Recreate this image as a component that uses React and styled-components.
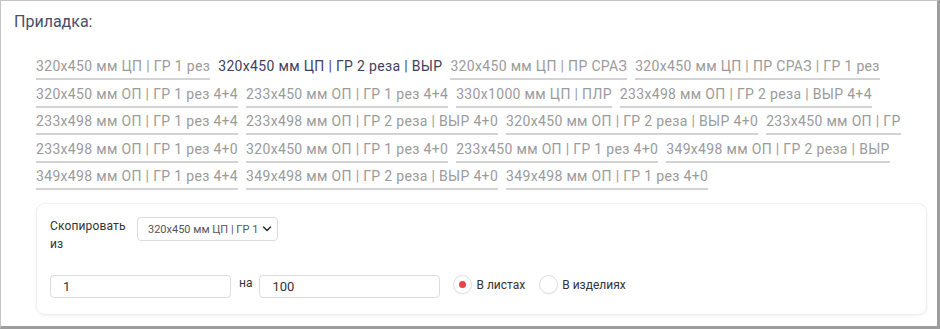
import React from "react";
import styled, { createGlobalStyle } from "styled-components";

const Global = createGlobalStyle`
  html, body { margin: 0; padding: 0; background: #fff; }
  body { font-family: Roboto, "Noto Sans", Arial, sans-serif; }
  * { box-sizing: border-box; }
`;

const Frame = styled.div`
  width: 940px;
  height: 329px;
  border-style: solid;
  border-color: #c4c4c4 #9d9d9d #9d9d9d #c4c4c4;
  border-width: 1px 3px 3px 1px;
  padding: 11px 10px 0 13px;
  display: flex;
  flex-direction: column;
`;

const Title = styled.div`
  font-size: 16px;
  line-height: 20px;
  color: #4b4d6b;
  margin-bottom: 24px;
`;

const TagList = styled.div`
  display: flex;
  flex-wrap: wrap;
  column-gap: 8px;
  row-gap: 3.6px;
  padding: 0 0 0 22px;
  width: 900px;
  margin-bottom: 13px;
`;

const Tag = styled.span`
  font-size: 14px;
  line-height: 20px;
  letter-spacing: 0.33px;
  padding-bottom: 2px;
  border-bottom: 2px solid ${(p) => (p.$active ? "transparent" : "#d3d3d3")};
  color: ${(p) => (p.$active ? "#3e3f5e" : "#9b9b9b")};
  white-space: nowrap;
  cursor: pointer;
`;

const Card = styled.div`
  margin-left: 22px;
  width: 891px;
  border: 1px solid #efefef;
  border-radius: 9px;
  box-shadow: 0 1px 3px rgba(0, 0, 0, 0.06);
  padding: 13px 14px 16px 13px;
  display: flex;
  flex-direction: column;
  gap: 22px;
`;

const Row = styled.div`
  display: flex;
  align-items: ${(p) => p.$align || "center"};
`;

const Label = styled.div`
  font-size: 12px;
  line-height: 18px;
  letter-spacing: 0.15px;
  color: #333;
  width: 87px;
`;

const SelectWrap = styled.div`
  position: relative;
  width: 141px;
  height: 24px;
`;

const Select = styled.select`
  appearance: none;
  -webkit-appearance: none;
  width: 100%;
  height: 100%;
  border: 1px solid #dcdcdc;
  border-radius: 4px;
  background: #fff;
  font-family: Roboto, Arial, sans-serif;
  font-size: 11px;
  color: #555;
  padding: 0 18px 0 10px;
  outline: none;
`;

const Chevron = styled.svg`
  position: absolute;
  right: 6px;
  top: 8px;
  width: 10px;
  height: 8px;
  pointer-events: none;
  background: #fff;
`;

const Input = styled.input`
  width: 181px;
  height: 23px;
  border: 1px solid #dcdcdc;
  border-radius: 4px;
  padding: 0 12px;
  font-family: Roboto, Arial, sans-serif;
  font-size: 13px;
  color: #333;
  outline: none;
`;

const On = styled.span`
  font-size: 12px;
  color: #333;
  margin: 0 7px 0 8px;
  align-self: flex-start;
  padding-top: 1px;
`;

const RadioGroup = styled.div`
  display: flex;
  align-items: center;
  gap: 14px;
  margin-left: 13px;
`;

const RadioItem = styled.label`
  display: flex;
  align-items: center;
  gap: 4px;
  font-size: 12px;
  color: #333;
  cursor: pointer;
  margin-top: -4px;
`;

const Circle = styled.span`
  width: 19px;
  height: 19px;
  border-radius: 50%;
  border: 1px solid #dedede;
  display: flex;
  align-items: center;
  justify-content: center;
  box-shadow: 0 1px 2px rgba(0, 0, 0, 0.05);
  &::after {
    content: "";
    width: 7px;
    height: 7px;
    border-radius: 50%;
    background: ${(p) => (p.$checked ? "#e84545" : "transparent")};
  }
`;

const tags = [
  ["320x450 мм ЦП | ГР 1 рез", false],
  ["320x450 мм ЦП | ГР 2 реза | ВЫР", true],
  ["320x450 мм ЦП | ПР СРАЗ", false],
  ["320x450 мм ЦП | ПР СРАЗ | ГР 1 рез", false],
  ["320x450 мм ОП | ГР 1 рез 4+4", false],
  ["233x450 мм ОП | ГР 1 рез 4+4", false],
  ["330x1000 мм ЦП | ПЛР", false],
  ["233x498 мм ОП | ГР 2 реза | ВЫР 4+4", false],
  ["233x498 мм ОП | ГР 1 рез 4+4", false],
  ["233x498 мм ОП | ГР 2 реза | ВЫР 4+0", false],
  ["320x450 мм ОП | ГР 2 реза | ВЫР 4+0", false],
  ["233x450 мм ОП | ГР", false],
  ["233x498 мм ОП | ГР 1 рез 4+0", false],
  ["320x450 мм ОП | ГР 1 рез 4+0", false],
  ["233x450 мм ОП | ГР 1 рез 4+0", false],
  ["349x498 мм ОП | ГР 2 реза | ВЫР", false],
  ["349x498 мм ОП | ГР 1 рез 4+4", false],
  ["349x498 мм ОП | ГР 2 реза | ВЫР 4+0", false],
  ["349x498 мм ОП | ГР 1 рез 4+0", false],
];

export default function App() {
  return (
    <>
      <Global />
      <Frame>
        <Title>Приладка:</Title>
        <TagList>
          {tags.map(([t, a], i) => (
            <Tag key={i} $active={a}>
              {t}
            </Tag>
          ))}
        </TagList>
        <Card>
          <Row $align="flex-start">
            <Label>Скопировать из</Label>
            <SelectWrap>
              <Select defaultValue="a">
                <option value="a">320x450 мм ЦП | ГР 1 рез</option>
              </Select>
              <Chevron viewBox="0 0 10 8">
                <path d="M1.5 2 L5 5.5 L8.5 2" fill="none" stroke="#333" strokeWidth="1.6" strokeLinecap="round" strokeLinejoin="round" />
              </Chevron>
            </SelectWrap>
          </Row>
          <Row>
            <Input defaultValue="1" />
            <On>на</On>
            <Input defaultValue="100" />
            <RadioGroup>
              <RadioItem>
                <Circle $checked />В листах
              </RadioItem>
              <RadioItem>
                <Circle />В изделиях
              </RadioItem>
            </RadioGroup>
          </Row>
        </Card>
      </Frame>
    </>
  );
}
